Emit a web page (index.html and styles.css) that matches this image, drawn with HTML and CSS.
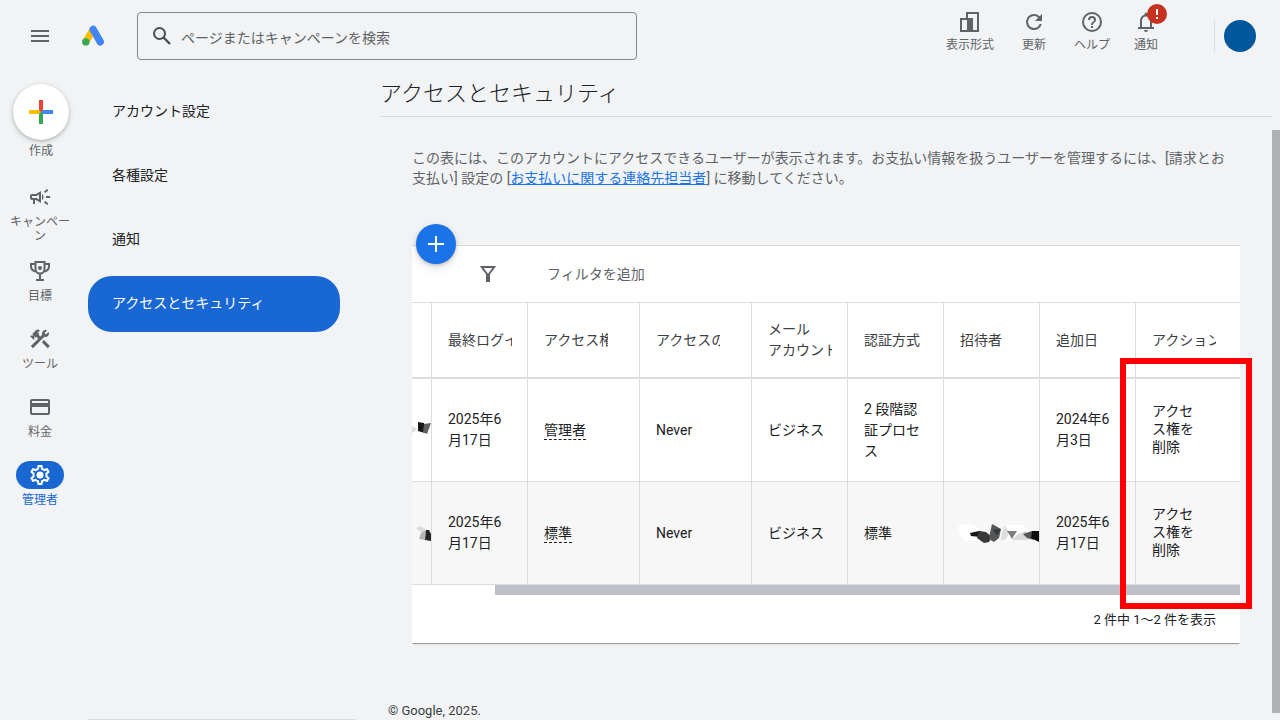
FILE: index.html
```html
<!DOCTYPE html>
<html lang="ja">
<head>
<meta charset="utf-8">
<title>アクセスとセキュリティ</title>
<link rel="stylesheet" href="styles.css">
</head>
<body>
<div class="app">
  <header class="topbar">
    <button class="icon-btn menu-btn" aria-label="メニュー">
      <svg width="18" height="12" viewBox="0 0 18 12" fill="#5f6368"><path d="M0 0h18v2H0zM0 5h18v2H0zM0 10h18v2H0z"/></svg>
    </button>
    <a class="logo" href="#" aria-label="広告">
      <svg width="24" height="22" viewBox="0 0 24 22"><path d="M5 16.500L12 4.500" stroke="#fbbc04" stroke-width="7" stroke-linecap="round"/><path d="M12.200 4.500L19.300 16.800" stroke="#4285f4" stroke-width="7.400" stroke-linecap="round"/><circle cx="4.800" cy="16.900" r="3.700" fill="#34a853"/></svg>
    </a>
    <form class="search">
      <svg width="18" height="18" viewBox="0 0 18 18" fill="none" stroke="#4a4d51" stroke-width="2"><circle cx="6.500" cy="6.500" r="5.500"/><path d="M10.500 10.500L17 17" stroke-width="2.400"/></svg>
      <input class="search-input" type="text" placeholder="ページまたはキャンペーンを検索" aria-label="ページまたはキャンペーンを検索">
    </form>
    <div class="tools">
      <button class="tool">
        <svg width="24" height="24" viewBox="0 0 24 24"><path d="M9 8V3h11v18H3V9h6" fill="none" stroke="#5f6368" stroke-width="2"/><path d="M9 8h6v13H9z" fill="#5f6368"/></svg>
        <span>表示形式</span>
      </button>
      <button class="tool tool-wide">
        <svg width="24" height="24" viewBox="0 0 24 24" fill="#5f6368"><path d="M17.650 6.350A7.960 7.960 0 0 0 12 4a8 8 0 1 0 7.730 10h-2.080A6 6 0 1 1 12 6c1.660 0 3.140.690 4.220 1.780L13 11h7V4z"/></svg>
        <span>更新</span>
      </button>
      <button class="tool">
        <svg width="24" height="24" viewBox="0 0 24 24" fill="#5f6368"><path d="M11 18h2v-2h-2zm1-16a10 10 0 1 0 0 20 10 10 0 0 0 0-20zm0 18a8 8 0 1 1 0-16 8 8 0 0 1 0 16zm0-14a4 4 0 0 0-4 4h2a2 2 0 1 1 4 0c0 2-3 1.750-3 5h2c0-2.250 3-2.500 3-5a4 4 0 0 0-4-4z"/></svg>
        <span>ヘルプ</span>
      </button>
      <button class="tool">
        <svg width="24" height="24" viewBox="0 0 24 24" fill="#5f6368"><path d="M12 22a2 2 0 0 0 2-2h-4a2 2 0 0 0 2 2zm6-5v-6c0-3.070-1.630-5.640-4.500-6.320V4a1.500 1.500 0 0 0-3 0v.680C7.640 5.360 6 7.920 6 11v6H4v2h16v-2zm-2 0H8v-6c0-2.480 1.510-4.500 4-4.500s4 2.020 4 4.500z"/></svg>
        <svg class="badge" width="20" height="20" viewBox="0 0 20 20"><circle cx="10" cy="10" r="10" fill="#c5321f"/><path d="M9 5h2v6H9zM9 13h2v2H9z" fill="#fff"/></svg>
        <span>通知</span>
      </button>
    </div>
    <div class="account"><button class="avatar" aria-label="アカウント"></button></div>
  </header>

  <nav class="rail" aria-label="メイン">
    <button class="create">
      <span class="create-disc"><svg width="24" height="24" viewBox="0 0 24 24"><path d="M10 0h4v12h-4z" fill="#ea4335"/><path d="M0 10h10l2 2-2 2H0z" fill="#fbbc04"/><path d="M10 14l4-4h10v4H14z" fill="#4285f4"/><path d="M10 14l2-2 2 2v10h-4z" fill="#34a853"/></svg></span>
      <span>作成</span>
    </button>
    <a class="rail-item" href="#">
      <span class="pill"><svg width="24" height="24" viewBox="0 0 24 24" fill="#5f6368"><path d="M18 11v2h4v-2zM16 17.610c.960.710 2.210 1.650 3.200 2.390l1.200-1.600c-.990-.740-2.240-1.680-3.200-2.400zM20.400 5.600L19.200 4c-.990.740-2.240 1.680-3.200 2.400l1.200 1.600c.960-.720 2.210-1.650 3.200-2.400zM4 9a2 2 0 0 0-2 2v2a2 2 0 0 0 2 2h1v4h2v-4h1l5 3V6L8 9zm5.030 1.710L11 9.530v4.940l-1.970-1.180-.480-.290H4v-2h4.550zM15.500 12c0-1.330-.580-2.530-1.500-3.350v6.690c.920-.810 1.500-2.010 1.500-3.340z"/></svg></span>
      <span>キャンペーン</span>
    </a>
    <a class="rail-item" href="#">
      <span class="pill"><svg width="24" height="24" viewBox="0 0 24 24" fill="none" stroke="#5f6368" stroke-width="2"><path d="M7.500 3h9v7a4.500 4.500 0 0 1-9 0zM7 5H3v2c0 3 1.500 5 5 5.500M17 5h4v2c0 3-1.500 5-5 5.500M12 15v6M8 21h8"/><circle cx="12" cy="9" r="2" fill="#5f6368" stroke="none"/></svg></span>
      <span>目標</span>
    </a>
    <a class="rail-item" href="#">
      <span class="pill"><svg width="24" height="24" viewBox="0 0 24 24" fill="#5f6368"><path d="M13.783 15.172l2.121-2.121 5.996 5.996-2.121 2.121zM17.500 10c1.930 0 3.500-1.570 3.500-3.500 0-.580-.160-1.120-.410-1.600l-2.700 2.700-1.490-1.490 2.700-2.700C18.620 3.160 18.080 3 17.500 3 15.570 3 14 4.570 14 6.500c0 .410.080.800.210 1.160l-1.850 1.850-1.780-1.780.710-.710-1.410-1.410L12 3.490a3 3 0 0 0-4.240 0L4.220 7.030l1.410 1.410H2.810l-.710.710 3.540 3.540.710-.710V9.150l1.410 1.410.710-.710 1.780 1.780-7.410 7.410 2.120 2.120L16.340 9.790c.360.130.750.210 1.160.210z"/></svg></span>
      <span>ツール</span>
    </a>
    <a class="rail-item" href="#">
      <span class="pill"><svg width="24" height="24" viewBox="0 0 24 24" fill="#5f6368"><path d="M20 4H4a2 2 0 0 0-2 2v12a2 2 0 0 0 2 2h16a2 2 0 0 0 2-2V6a2 2 0 0 0-2-2zm0 14H4v-6h16zm0-10H4V6h16z"/></svg></span>
      <span>料金</span>
    </a>
    <a class="rail-item rail-active" href="#">
      <span class="pill"><svg width="24" height="24" viewBox="0 0 24 24" fill="#fff"><path d="M19.430 12.980c.040-.320.070-.640.070-.980s-.030-.660-.070-.980l2.110-1.650a.500.500 0 0 0 .120-.640l-2-3.460a.500.500 0 0 0-.610-.220l-2.490 1a7.300 7.300 0 0 0-1.690-.980l-.380-2.650A.490.490 0 0 0 14 2h-4a.490.490 0 0 0-.490.420l-.380 2.650c-.610.250-1.170.590-1.690.980l-2.490-1a.500.500 0 0 0-.610.220l-2 3.460a.490.490 0 0 0 .120.640l2.110 1.650c-.040.320-.070.650-.070.980s.030.660.070.980l-2.110 1.650a.500.500 0 0 0-.120.640l2 3.460c.120.220.390.300.610.220l2.490-1c.520.400 1.080.730 1.690.980l.380 2.650c.030.240.240.420.490.420h4c.250 0 .460-.180.490-.420l.380-2.650a7.700 7.700 0 0 0 1.690-.980l2.490 1c.230.090.490 0 .610-.220l2-3.460a.500.500 0 0 0-.120-.640zm-1.980-1.710c.040.310.050.520.050.730s-.020.430-.050.730l-.140 1.130.890.700 1.080.840-.700 1.210-1.270-.510-1.040-.420-.900.680c-.430.320-.840.560-1.250.730l-1.060.430-.160 1.130-.200 1.350h-1.400l-.190-1.350-.160-1.130-1.060-.430c-.430-.180-.830-.410-1.230-.710l-.910-.700-1.060.430-1.270.510-.700-1.210 1.080-.840.890-.700-.140-1.130c-.030-.310-.050-.540-.050-.740s.020-.430.050-.730l.140-1.130-.890-.700-1.080-.840.700-1.210 1.270.510 1.040.420.900-.680c.430-.320.840-.560 1.250-.730l1.060-.430.160-1.130.200-1.350h1.390l.190 1.350.160 1.130 1.060.430c.430.180.830.410 1.230.710l.910.700 1.060-.430 1.270-.510.700 1.210-1.070.850-.890.700zM12 8.500a3.500 3.500 0 1 0 0 7 3.500 3.500 0 0 0 0-7z"/></svg></span>
      <span>管理者</span>
    </a>
  </nav>

  <nav class="subnav" aria-label="管理者">
    <a class="subnav-item" href="#">アカウント設定</a>
    <a class="subnav-item" href="#">各種設定</a>
    <a class="subnav-item" href="#">通知</a>
    <a class="subnav-item subnav-active" href="#" aria-current="page">アクセスとセキュリティ</a>
  </nav>

  <main class="main">
    <h1 class="title">アクセスとセキュリティ</h1>
    <div class="content">
      <p class="intro">この表には、このアカウントにアクセスできるユーザーが表示されます。お支払い情報を扱うユーザーを管理するには、[請求とお支払い] 設定の [<a class="link" href="#">お支払いに関する連絡先担当者</a>] に移動してください。</p>
      <section class="card">
        <button class="fab" aria-label="追加"><svg width="16" height="16" viewBox="0 0 16 16" fill="#fff"><path d="M7 0h2v7h7v2H9v7H7V9H0V7h7z"/></svg></button>
        <div class="filter">
          <svg width="16" height="16" viewBox="0 0 16 16" fill="none" stroke="#5f6368" stroke-width="2"><path d="M1.800 1h12.400L9 8v7H7V8z"/></svg>
          <input class="filter-input" type="text" placeholder="フィルタを追加" aria-label="フィルタを追加">
        </div>
        <table class="users">
          <colgroup><col class="c-first"><col class="c-s"><col class="c-m"><col class="c-m"><col class="c-s"><col class="c-s"><col class="c-s"><col class="c-s"><col></colgroup>
          <thead>
            <tr>
              <th></th>
              <th><div class="clip">最終ログイン</div></th>
              <th><div class="clip">アクセス権</div></th>
              <th><div class="clip">アクセスの</div></th>
              <th><div class="clip">メール<br>アカウント</div></th>
              <th><div class="clip">認証方式</div></th>
              <th><div class="clip">招待者</div></th>
              <th><div class="clip">追加日</div></th>
              <th><div class="clip">アクション</div></th>
            </tr>
          </thead>
          <tbody>
            <tr>
              <td class="mosaic"><svg width="19" height="24" viewBox="0 5 19 24"><path d="M0 13l5 3-3 3-2 1z" fill="#ddd"/><path d="M6 9l6 1 1 10-7-2z" fill="#171819"/><path d="M12 11l7-1-4 11-4-2z" fill="#5d5f61"/></svg></td>
              <td>2025年6月17日</td>
              <td><span class="role">管理者</span></td>
              <td>Never</td>
              <td>ビジネス</td>
              <td>2 段階認証プロセス</td>
              <td></td>
              <td>2024年6月3日</td>
              <td><button class="remove">アクセス権を削除</button></td>
            </tr>
            <tr>
              <td class="mosaic"><svg width="19" height="24" viewBox="0 0 19 24"><path d="M4 7l5-2 5 4-4 3z" fill="#ddd"/><path d="M9 12l5-3-1 10-6-1z" fill="#b5b5b5"/><path d="M14 9h3l2 4v7l-6-1z" fill="#242526"/></svg></td>
              <td>2025年6月17日</td>
              <td><span class="role">標準</span></td>
              <td>Never</td>
              <td>ビジネス</td>
              <td>標準</td>
              <td class="mosaic"><svg width="95" height="24" viewBox="0 -1 95 24"><path d="M15 3l12-1 7 4v12l-13 1-7-9z" fill="#fff"/><path d="M63 3h16l6 5-3 9-20 2z" fill="#fff"/><path d="M26 11l9-2 6 2-5 4-9-1z" fill="#161718"/><path d="M35 9l7 1 6 5-3 5-5 1-7-5z" fill="#38393b"/><path d="M46 11l2-9 9 5-2 9-5 4-5-3z" fill="#555759"/><path d="M49 8l8-1-4 6z" fill="#343638"/><path d="M58 11l2-7 5 5-2 7-6 3z" fill="#dedede"/><path d="M63 9h10l-5 8z" fill="#7c7e80"/><path d="M74 12l8-3 3 9H68z" fill="#d9d9d9"/><path d="M79 12l9-3 2 9-7-2z" fill="#555759"/><path d="M88 9h7v11l-8-4z" fill="#0d0e0f"/></svg></td>
              <td>2025年6月17日</td>
              <td><button class="remove">アクセス権を削除</button></td>
            </tr>
          </tbody>
        </table>
        <div class="hscroll"></div>
        <div class="pager">2 件中 1〜2 件を表示</div>
        <div class="highlight"></div>
      </section>
    </div>
    <footer class="copyright">© Google, 2025.</footer>
  </main>
  <div class="vscroll"></div>
</div>
</body>
</html>
```

FILE: styles.css
```css
* { box-sizing: border-box; }

body {
  margin: 0;
  background: #f1f3f4;
  color: #202124;
  font-family: Roboto, "Noto Sans CJK JP", sans-serif;
  font-size: 14px;
  line-height: 21px;
}

button, input {
  margin: 0;
  padding: 0;
  border: 0;
  background: none;
  color: inherit;
  font: inherit;
}

a { color: inherit; text-decoration: none; }
svg { display: block; flex: none; }

.app {
  display: grid;
  grid-template-columns: 88px 292px minmax(0, 1fr) 8px;
  grid-template-rows: 72px minmax(0, 1fr);
  height: 100vh;
  overflow: hidden;
}

/* Top bar */
.topbar {
  grid-column: 1 / -1;
  display: flex;
  align-items: center;
  padding: 0 24px 0 31px;
}
.menu-btn { margin-right: 32px; }
.logo { margin-right: 32px; }
.search {
  display: flex;
  align-items: center;
  gap: 10px;
  flex: 0 1 500px;
  height: 48px;
  padding: 0 15px;
  border: 1px solid #80868b;
  border-radius: 4px;
}
.search-input { flex: 1; min-width: 0; height: 24px; padding-top: 3px; outline: 0; }
.search-input::placeholder, .filter-input::placeholder { color: #5f6368; opacity: 1; }

.tools {
  display: flex;
  gap: 24px;
  margin-left: auto;
  padding-bottom: 11px;
}
.tool {
  position: relative;
  display: flex;
  flex-direction: column;
  align-items: center;
  gap: 4px;
  color: #5f6368;
  font-size: 12px;
  line-height: 14px;
}
.tool-wide { padding: 0 4px; }
.badge { position: absolute; top: -6px; left: 13px; }
.account {
  margin-left: 56px;
  padding-left: 9px;
  border-left: 1px solid #dadce0;
}
.avatar { display: block; width: 32px; height: 32px; border-radius: 50%; background: #01579b; }

/* Icon rail */
.rail {
  display: flex;
  flex-direction: column;
  align-items: center;
  gap: 14px;
  width: 80px;
  padding-top: 12px;
  color: #5f6368;
  font-size: 12px;
  line-height: 14px;
  text-align: center;
}
.create {
  display: flex;
  flex-direction: column;
  align-items: center;
  gap: 4px;
  margin: 0 0 11px 2px;
}
.create-disc {
  display: grid;
  place-items: center;
  width: 56px;
  height: 56px;
  border-radius: 50%;
  background: #fff;
  box-shadow: 0 1px 3px rgba(60, 64, 67, .3), 0 2px 6px rgba(60, 64, 67, .15);
}
.rail-item {
  display: flex;
  flex-direction: column;
  align-items: center;
  gap: 4px;
  width: 64px;
  min-height: 54px;
}
.pill {
  display: grid;
  place-items: center;
  width: 48px;
  height: 28px;
  border-radius: 14px;
}
.rail-active { color: #1967d2; }
.rail-active .pill { background: #1967d2; }

/* Section list */
.subnav {
  display: flex;
  flex-direction: column;
  gap: 8px;
  margin-right: 24px;
  padding: 12px 16px 0 0;
  border-bottom: 1px solid #dadce0;
}
.subnav-item {
  display: flex;
  align-items: center;
  height: 56px;
  padding: 0 24px 2px;
  border-radius: 24px;
}
.subnav-active { background: #1967d2; color: #fff; }

/* Main area */
.main { overflow: hidden; }
.title {
  margin: 0;
  border-bottom: 1px solid #dadce0;
  font-size: 22px;
  font-weight: 300;
  line-height: 44px;
}
.content { padding: 31px 32px 0; }
.intro { margin: 0 0 57px; padding-right: 4px; color: #5f6368; line-height: 20px; }
.link { color: #1a73e8; text-decoration: underline; }

.card {
  position: relative;
  border-top: 1px solid #dadce0;
  background: #fff;
  box-shadow: 0 2px 1px -1px rgba(0, 0, 0, .35);
}
.fab {
  position: absolute;
  top: -22px;
  left: 4px;
  display: grid;
  place-items: center;
  width: 40px;
  height: 40px;
  border-radius: 50%;
  background: #1a73e8;
  box-shadow: 0 1px 3px rgba(60, 64, 67, .3), 0 4px 8px rgba(60, 64, 67, .15);
}
.filter {
  display: flex;
  align-items: center;
  gap: 51px;
  height: 56px;
  padding-left: 68px;
}
.filter-input { flex: 1; min-width: 0; height: 24px; outline: 0; }

.users {
  width: 100%;
  table-layout: fixed;
  border-collapse: separate;
  border-spacing: 0;
}
.c-first { width: 19px; }
.c-s { width: 96px; }
.c-m { width: 112px; }
.users th, .users td {
  padding: 0 16px;
  border-left: 1px solid #dadce0;
  text-align: left;
  vertical-align: middle;
}
.users th:first-child, .users td:first-child { padding: 0; border-left: 0; }
.users th {
  height: 77px;
  border-top: 1px solid #dadce0;
  border-bottom: 2px solid #dadce0;
  color: #3c4043;
  font-weight: 400;
}
.users td { height: 103px; border-bottom: 1px solid #dadce0; }
.users tbody tr:nth-child(even) { background: #f7f7f7; }
.users .mosaic { padding: 0; }
.clip { width: 64px; overflow: hidden; white-space: nowrap; }
.role { padding-bottom: 1px; border-bottom: 1px dashed #202124; }
.remove { width: 48px; line-height: 18px; text-align: left; }

.hscroll { width: 90%; height: 10px; margin-left: auto; background: #bdc1c6; }
.pager {
  padding: 1px 24px 0;
  font-size: 13px;
  line-height: 47px;
  text-align: right;
}
.highlight {
  position: absolute;
  top: 112px;
  right: -12px;
  width: 132px;
  height: 251px;
  border: 6px solid #f00;
  pointer-events: none;
}
.copyright {
  margin-top: 60px;
  padding-left: 8px;
  color: #3c4043;
  font-size: 13px;
  line-height: 16px;
}
.vscroll { margin: 58px 0 7px; background: #b0b1b3; }
```
